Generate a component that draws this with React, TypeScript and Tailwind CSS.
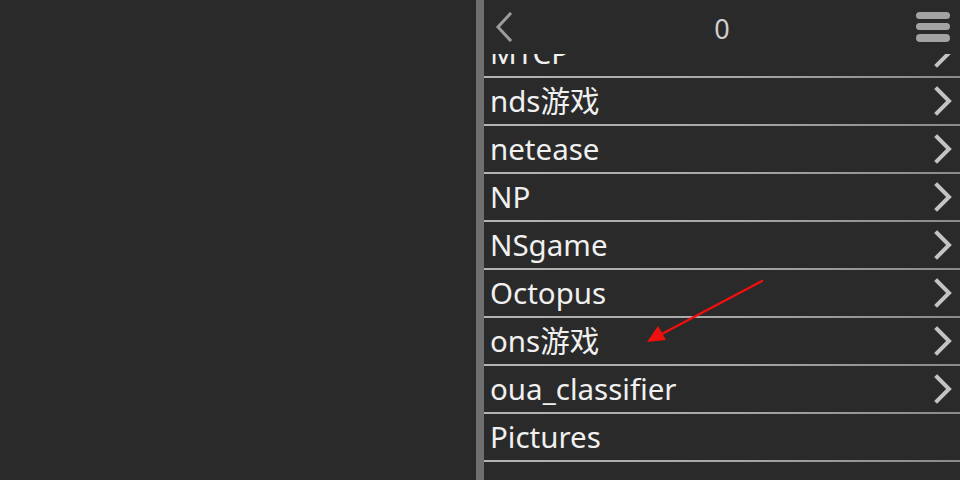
import React from 'react';

const folders = [
  { name: 'MTCP', dir: true },
  { name: 'nds游戏', dir: true },
  { name: 'netease', dir: true },
  { name: 'NP', dir: true },
  { name: 'NSgame', dir: true },
  { name: 'Octopus', dir: true },
  { name: 'ons游戏', dir: true },
  { name: 'oua_classifier', dir: true },
  { name: 'Pictures', dir: false },
];

const Chevron: React.FC = () => (
  <svg width="20" height="30" viewBox="0 0 20 30" className="shrink-0">
    <path d="M4 3 L16 15 L4 27" fill="none" stroke="#c4c4c4" strokeWidth="4" strokeLinecap="square" />
  </svg>
);

const FolderRow: React.FC<{ name: string; dir: boolean }> = ({ name, dir }) => (
  <div className="flex flex-col">
    <div className="h-[46px] flex items-center justify-between pl-[6px] pr-[7px]">
      <span className="text-[29.5px] leading-none text-[#f0f0f0]">{name}</span>
      {dir && <Chevron />}
    </div>
    <div className="h-[2px] bg-gradient-to-r from-[#b4b4b4] via-[#a8a8a8] to-[#8a8a8a]" />
  </div>
);

export default function App() {
  return (
    <div
      className="w-[960px] h-[480px] flex bg-[#2a2a2a] overflow-hidden"
      style={{ fontFamily: '"Noto Sans", "Open Sans", "Noto Sans CJK SC", sans-serif' }}
    >
      <div className="w-[476px] h-full bg-[#2a2a2a]" />
      <div className="w-[8px] h-full bg-[#6f6f6f]" />
      <div className="relative flex-1 h-full flex flex-col">
        <div className="h-[54px] shrink-0 flex items-center justify-between px-[10px] bg-[#2a2a2a] z-10">
          <div className="w-[34px] flex">
            <svg width="20" height="30" viewBox="0 0 20 30">
              <path d="M16 2 L4 15 L16 28" fill="none" stroke="#9c9c9c" strokeWidth="3" strokeLinecap="square" />
            </svg>
          </div>
          <span className="text-[27px] leading-none text-[#cfcfcf] pt-[2px]">0</span>
          <div className="flex flex-col gap-[4px] w-[34px]">
            <div className="h-[7px] rounded-full bg-[#a3a3a3]" />
            <div className="h-[7px] rounded-full bg-[#a3a3a3]" />
            <div className="h-[8px] rounded-full bg-[#a3a3a3]" />
          </div>
        </div>
        <div className="flex-1 overflow-hidden">
          <div className="-mt-[24px] flex flex-col">
            {folders.map((f) => (
              <FolderRow key={f.name} name={f.name} dir={f.dir} />
            ))}
          </div>
        </div>
        <svg className="absolute left-[160px] top-[278px]" width="125" height="70" viewBox="0 0 125 70">
          <line x1="118" y1="3" x2="14" y2="58" stroke="#ee0f0f" strokeWidth="2.5" strokeLinecap="round" />
          <path d="M3 64 L14 48 L22 62 Z" fill="#ee0f0f" />
        </svg>
      </div>
    </div>
  );
}
